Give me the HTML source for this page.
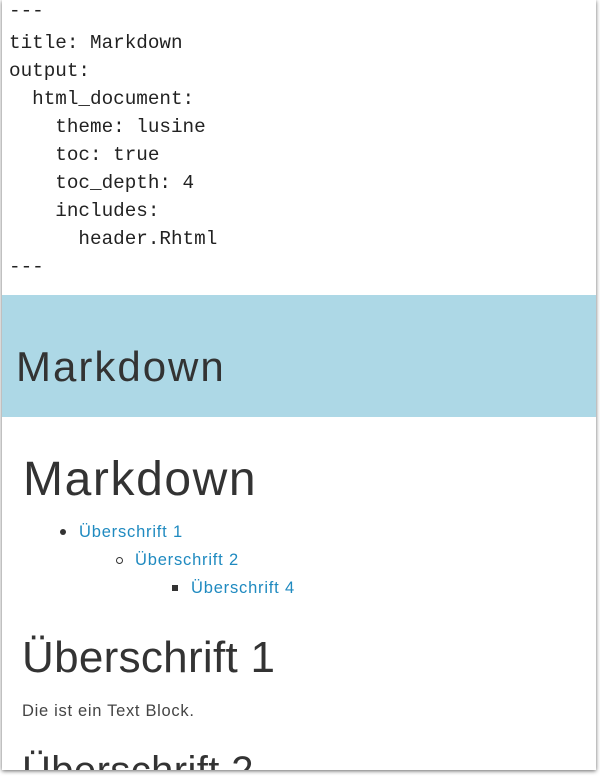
<!DOCTYPE html>
<html><head><meta charset="utf-8"><style>
html,body{margin:0;padding:0;background:#fff;width:600px;height:776px;overflow:hidden}
.card{position:absolute;left:2px;top:0;width:594px;height:770px;background:#fff;box-shadow:0 1px 4px rgba(0,0,0,.6);overflow:hidden}
.t{position:absolute;white-space:pre;line-height:1}
.m{font-family:"Liberation Mono",monospace;font-size:19.3px;color:#222}
.s{font-family:"Liberation Sans",sans-serif;color:#333}
.band{position:absolute;left:0;top:295px;width:594px;height:122px;background:#add8e6}
a{color:#1f8ac0;text-decoration:none}
.dot{position:absolute}
.toc{font-size:16.5px;letter-spacing:0.8px}
</style></head><body><div class="card">
<div class="t m" style="left:7px;top:2px">---</div>
<div class="t m" style="left:7px;top:34px">title: Markdown</div>
<div class="t m" style="left:7px;top:62px">output:</div>
<div class="t m" style="left:7px;top:90px">  html_document:</div>
<div class="t m" style="left:7px;top:118px">    theme: lusine</div>
<div class="t m" style="left:7px;top:146px">    toc: true</div>
<div class="t m" style="left:7px;top:174px">    toc_depth: 4</div>
<div class="t m" style="left:7px;top:202px">    includes:</div>
<div class="t m" style="left:7px;top:230px">      header.Rhtml</div>
<div class="t m" style="left:7px;top:258px">---</div>
<div class="band"></div>
<div class="t s" style="left:14px;top:346px;font-size:42px;letter-spacing:2px">Markdown</div>
<div class="t s" style="left:21px;top:456px;font-size:48px;letter-spacing:1.6px">Markdown</div>
<div class="dot" style="left:58px;top:529px;width:6px;height:6px;border-radius:50%;background:#333"></div>
<div class="t s toc" style="left:77px;top:524px"><a>Überschrift 1</a></div>
<div class="dot" style="left:114px;top:557px;width:5px;height:5px;border-radius:50%;border:1px solid #333"></div>
<div class="t s toc" style="left:133px;top:552px"><a>Überschrift 2</a></div>
<div class="dot" style="left:170px;top:585px;width:6px;height:6px;background:#333"></div>
<div class="t s toc" style="left:189px;top:580px"><a>Überschrift 4</a></div>
<div class="t s" style="left:20px;top:636px;font-size:44px;letter-spacing:0.3px">Überschrift 1</div>
<div class="t s" style="left:20px;top:703px;font-size:16.5px;color:#444;letter-spacing:0.7px">Die ist ein Text Block.</div>
<div class="t s" style="left:20px;top:751px;font-size:40px;letter-spacing:0.4px">Überschrift 2</div>
</div></body></html>
